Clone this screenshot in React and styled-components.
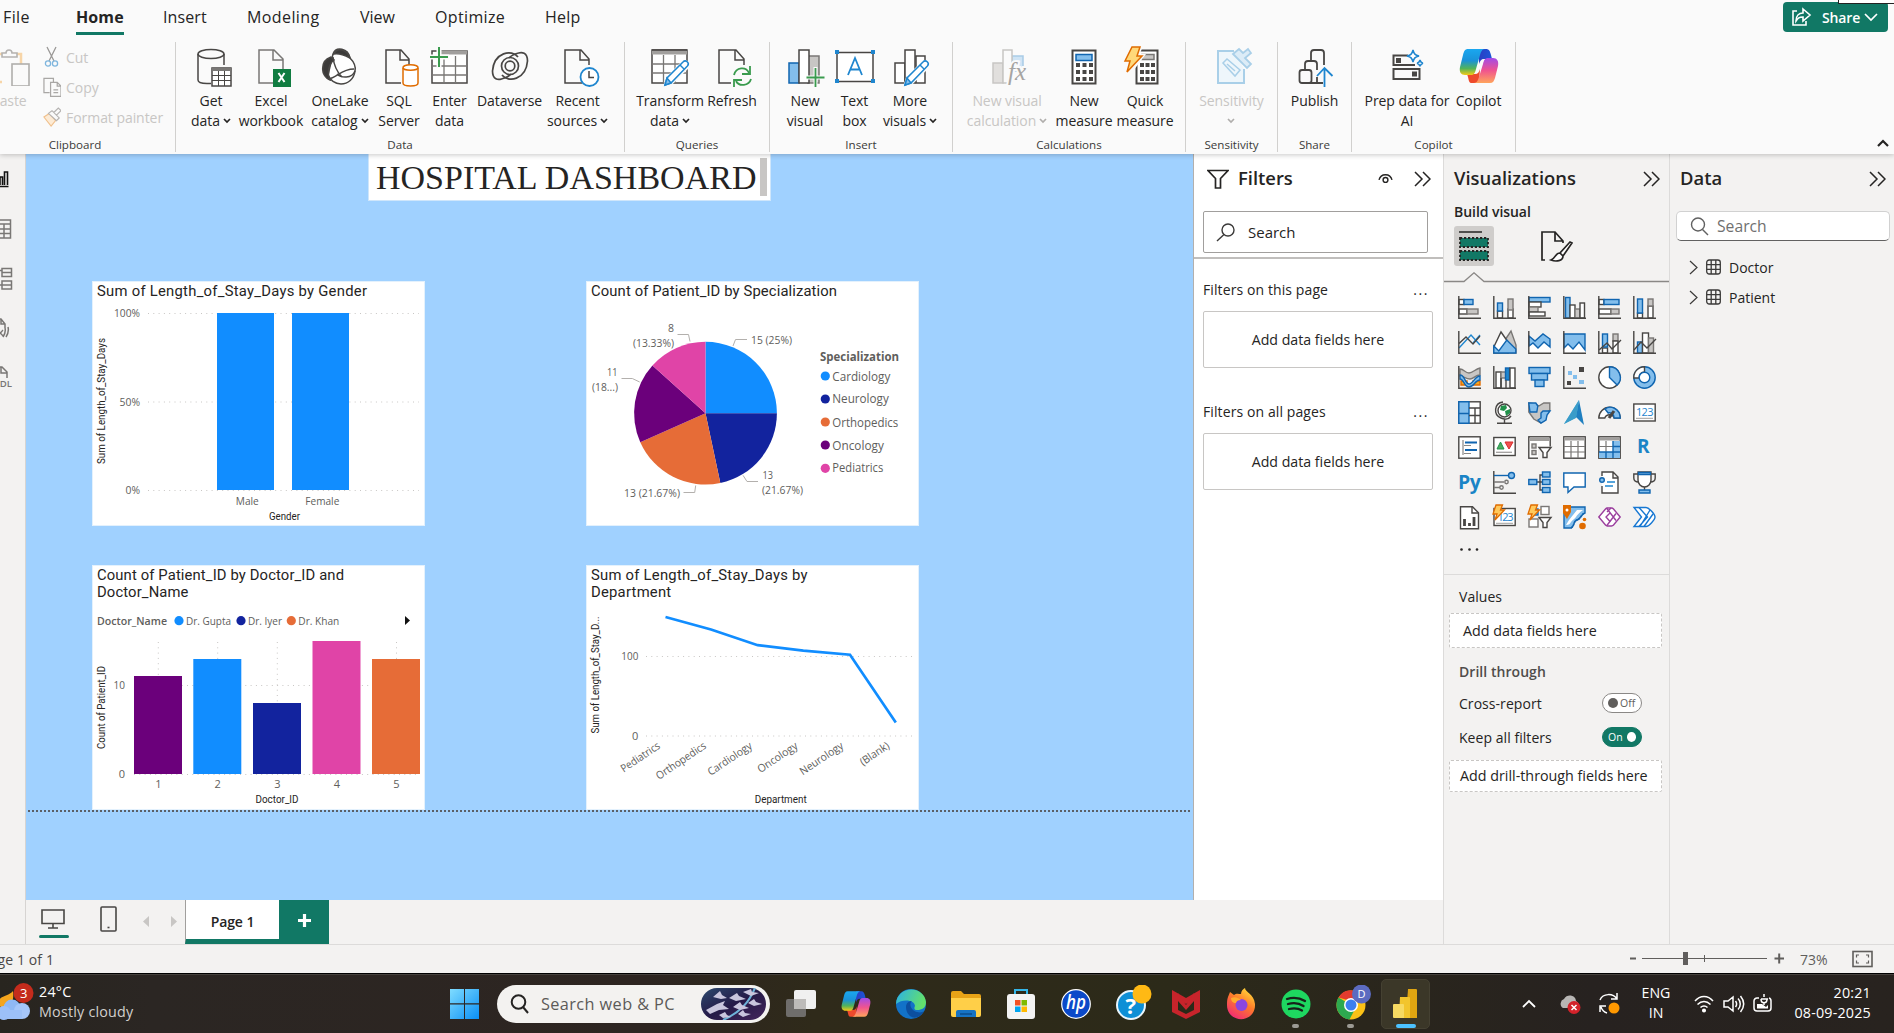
import React from "react";
import styled, { createGlobalStyle, css } from "styled-components";

const ui = `"Open Sans", "Noto Sans", sans-serif`;
const din = `Roboto, "Open Sans", sans-serif`;
const green = "#117865";
const blue = "#118DFF";
const navy = "#12239E";
const orange = "#E66C37";
const purple = "#6B007B";
const pink = "#E044A7";

const Global = createGlobalStyle`
  * { box-sizing: border-box; }
  body { margin: 0; overflow: hidden; background: #f3f2f1; font-family: ${ui}; color: #252423; }
  svg { display: block; flex: none; }
  h1, h2, h3, p { margin: 0; font-weight: inherit; }
`;

const Screen = styled.div`
  width: 1894px;
  height: 1033px;
  display: flex;
  flex-direction: column;
  overflow: hidden;
`;

/* ---------- ribbon ---------- */
const RibbonArea = styled.header`
  position: relative;
  z-index: 2;
  height: 154px;
  flex: none;
  background: #fafafa;
  box-shadow: 0 1px 5px rgba(0, 0, 0, 0.22);
  display: flex;
  flex-direction: column;
`;
const TabRow = styled.nav`
  height: 42px;
  display: flex;
  padding-left: 3px;
`;
const Tab = styled.div`
  width: ${(p) => p.$w}px;
  height: 35px;
  span {
    display: inline-block;
    height: 35px;
    font-size: 16px;
    line-height: 34px;
    letter-spacing: ${(p) => p.$ls || 0}px;
    font-weight: ${(p) => (p.$active ? 700 : 400)};
    border-bottom: 3px solid ${(p) => (p.$active ? green : "transparent")};
  }
`;
const ShareButton = styled.button`
  margin: 2px 6px 0 auto;
  width: 105px;
  height: 30px;
  border: 0;
  padding: 0 10px 0 8px;
  border-radius: 4px;
  background: ${green};
  color: #fff;
  font: 600 14px ${ui};
  letter-spacing: -0.15px;
  display: flex;
  align-items: center;
  svg:first-child { margin-right: 10px; }
  svg:last-child { margin-left: auto; }
`;
const WindowEdge = styled.div`
  position: absolute;
  right: 0;
  top: 0;
  width: 56px;
  height: 4px;
  background: #fff;
  border-left: 1px solid #222;
  border-bottom: 1px solid #222;
`;
const Groups = styled.div`
  display: flex;
  height: 110px;
`;
const Group = styled.section`
  width: ${(p) => p.$w}px;
  border-right: 1px solid #d1d0ce;
  display: flex;
  flex-direction: column;
  justify-content: space-between;
`;
const GroupItems = styled.div`
  display: flex;
  padding: 4px 0 0 ${(p) => p.$pad}px;
`;
const GroupName = styled.div`
  font-size: 11.6px;
  line-height: 16px;
  height: 15px;
  text-align: center;
  padding-right: ${(p) => p.$shift || 0}px;
  color: #3b3a39;
`;
const Tool = styled.div`
  width: ${(p) => p.$w}px;
  display: flex;
  flex-direction: column;
  align-items: center;
  gap: 5px;
  color: ${(p) => (p.$off ? "#c8c6c4" : "#252423")};
`;
const ToolText = styled.div`
  font-size: 14px;
  height: 20px;
  line-height: 20px;
  letter-spacing: -0.08px;
  white-space: nowrap;
  display: flex;
  align-items: center;
  gap: 3px;
`;
const ToolLines = styled.div`
  display: flex;
  flex-direction: column;
  align-items: center;
`;
const ClipTools = styled.div`
  display: flex;
  flex-direction: column;
  margin: -4px 0 -6px 5px;
`;
const ClipTool = styled.div`
  height: 30px;
  flex: none;
  display: flex;
  align-items: center;
  gap: 5px;
  font-size: 14px;
  letter-spacing: -0.05px;
  color: #c8c6c4;
`;
const PasteTool = styled(Tool)`
  margin-left: -20px;
`;
const Collapse = styled.div`
  margin-left: auto;
  padding: 97px 5px 0 0;
`;

/* ---------- workspace ---------- */
const Work = styled.main`
  height: 791px;
  flex: none;
  display: flex;
  border-bottom: 1px solid #dcdbda;
`;
const Rail = styled.aside`
  width: 26px;
  border-right: 1px solid #d6d4d2;
  background: #f3f2f1;
  padding-top: 14px;
  display: flex;
  flex-direction: column;
  gap: 26.500px;
`;
const Middle = styled.div`
  width: 1417px;
  display: flex;
  flex-direction: column;
`;
const MiddleTop = styled.div`
  display: flex;
  height: 746px;
`;
const Canvas = styled.div`
  position: relative;
  width: 1167px;
  background: #a0d1ff;
`;
const TitleBox = styled.div`
  position: absolute;
  left: 342px;
  top: 0;
  width: 403px;
  height: 47px;
  background: #fff;
  border: 1px solid #cfe6fb;
  border-top: 0;
  display: flex;
  padding-left: 7px;
  h1 {
    font: 34px/48px "Liberation Serif", serif;
    white-space: nowrap;
    width: 384px;
  }
`;
const ScrollThumb = styled.div`
  width: 7px;
  height: 38px;
  margin-top: 4px;
  background: #c8c6c4;
`;
const Card = styled.article`
  position: absolute;
  left: ${(p) => p.$x}px;
  top: ${(p) => p.$y}px;
  width: 333px;
  height: 245px;
  background: #fff;
  box-shadow: inset 0 0 0 1px #e3f1fd;
  display: flex;
  flex-direction: column;
  h3 {
    height: ${(p) => p.$lines * 17 + 4}px;
    padding: 2px 0 0 5px;
    font: 400 14.8px/17px ${din};
    letter-spacing: ${(p) => p.$ls}px;
    white-space: pre;
    color: #252423;
  }
`;
const PageEdge = styled.div`
  position: absolute;
  left: 2px;
  right: 2px;
  top: 656px;
  height: 2px;
  background: repeating-linear-gradient(90deg, #5a5f66 0 2px, transparent 2px 4px);
`;

/* ---------- filters ---------- */
const Filters = styled.aside`
  width: 250px;
  background: #fff;
  border-left: 1px solid #b3b0ad;
  display: flex;
  flex-direction: column;
`;
const PaneHead = styled.div`
  height: 50px;
  display: flex;
  align-items: center;
  padding: 0 ${(p) => p.$r}px 0 ${(p) => p.$l}px;
  h2 {
    font-size: 18.4px;
    font-weight: 600;
    margin: 0 auto 3px ${(p) => p.$gap || 0}px;
  }
`;
const HeadIcons = styled.div`
  display: flex;
  align-items: center;
  gap: 20px;
`;
const SearchBox = styled.div`
  margin: 7px 0 0 9px;
  width: 225px;
  height: 42px;
  flex: none;
  border: 1px solid #a19f9d;
  border-radius: 2px;
  display: flex;
  align-items: center;
  padding-left: 12px;
  gap: 13px;
  font-size: 15px;
`;
const FilterRule = styled.div`
  margin-top: 4px;
  border-top: 2px solid #c0bebc;
  height: 13px;
`;
const FilterHead = styled.div`
  display: flex;
  justify-content: space-between;
  margin: ${(p) => p.$mt}px 14px 0 9px;
  font-size: 14px;
  line-height: 20px;
  letter-spacing: 0.1px;
  span:last-child { letter-spacing: 1.6px; }
`;
const DropBox = styled.div`
  margin: 11px 0 0 9px;
  width: 230px;
  height: 57px;
  border: 1px solid #c8c6c4;
  border-radius: 2px;
  display: grid;
  place-items: center;
  padding-bottom: 1px;
  font-size: 14.2px;
`;

/* ---------- page tabs ---------- */
const PageBar = styled.div`
  height: 44px;
  display: flex;
`;
const ViewIcon = styled.div`
  width: ${(p) => p.$w}px;
  padding: ${(p) => p.$top}px 0 0 ${(p) => p.$l}px;
`;
const PageTab = styled.div`
  width: 94px;
  height: 44px;
  border-left: 1px solid #a19f9d;
  border-bottom: 5px solid ${green};
  background: #fff;
  font-size: 14px;
  font-weight: 600;
  letter-spacing: -0.1px;
  line-height: 44px;
  text-align: center;
`;
const AddPage = styled.div`
  width: 50px;
  height: 44px;
  background: ${green};
  display: grid;
  place-items: center;
  padding-bottom: 3px;
`;

/* ---------- visualizations ---------- */
const VizPane = styled.aside`
  width: 227px;
  border-left: 1px solid #dcdbda;
  border-right: 1px solid #dcdbda;
  background: #f3f2f1;
`;
const Build = styled.div`
  height: 22px;
  padding-left: 10px;
  font-size: 14px;
  line-height: 15px;
  font-weight: 600;
  letter-spacing: -0.05px;
`;
const ModeRow = styled.div`
  display: flex;
  gap: 47px;
  height: 46px;
  padding-left: 10px;
`;
const ModeTile = styled.div`
  width: 40px;
  height: 40px;
  border-radius: 3px;
  background: #cfcdcb;
  display: grid;
  place-items: center;
`;
const VizGrid = styled.div`
  margin: 13px 0 0 14px;
  display: grid;
  grid-template-columns: repeat(6, 23px);
  grid-auto-rows: 23px;
  gap: 12px;
`;
const Glyph = styled.div`
  color: #1a84c6;
  font-size: ${(p) => p.$s}px;
  line-height: 21px;
  font-weight: 700;
  padding-left: ${(p) => p.$l}px;
  letter-spacing: -0.4px;
`;
const More = styled.div`
  height: 46px;
  padding: 19px 0 0 16px;
  border-bottom: 1px solid #dcdbda;
`;
const Well = styled.div`
  margin: ${(p) => p.$mt}px 0 0 5px;
  width: 213px;
  height: ${(p) => p.$h}px;
  background: #fff;
  border: 1px dashed #c8c6c4;
  border-radius: 2px;
  display: flex;
  align-items: center;
  padding: 0 0 1px ${(p) => p.$l}px;
  font-size: 14.3px;
`;
const WellLabel = styled.div`
  margin-top: ${(p) => p.$mt}px;
  padding: 0 27px 0 15px;
  height: 20px;
  display: flex;
  align-items: center;
  justify-content: space-between;
  font-size: 14px;
  letter-spacing: 0.05px;
  font-weight: ${(p) => (p.$bold ? 600 : 400)};
  color: ${(p) => (p.$bold ? "#4f4d4b" : "#252423")};
`;
const Switch = styled.div`
  width: 40px;
  height: 20px;
  border-radius: 10px;
  border: 1px solid ${(p) => (p.$on ? green : "#8a8886")};
  background: ${(p) => (p.$on ? green : "#fff")};
  color: ${(p) => (p.$on ? "#fff" : "#605e5c")};
  display: flex;
  flex-direction: ${(p) => (p.$on ? "row-reverse" : "row")};
  align-items: center;
  gap: ${(p) => (p.$on ? 4 : 2)}px;
  padding: 0 5px;
  font-size: 10.5px;
  line-height: 18px;
  i {
    width: 10px;
    height: 10px;
    border-radius: 50%;
    background: currentColor;
  }
`;

/* ---------- data ---------- */
const DataPane = styled.aside`
  flex: 1;
  background: #f3f2f1;
`;
const DataSearch = styled.div`
  margin: 7px 0 11px 6px;
  width: 214px;
  height: 30px;
  background: #fff;
  border: 1px solid #d1d1d1;
  border-bottom: 1px solid #616161;
  border-radius: 5px;
  display: flex;
  align-items: center;
  gap: 8px;
  padding-left: 13px;
  font-size: 15.7px;
  color: #707070;
`;
const TableRow = styled.div`
  height: 30px;
  padding-left: 19px;
  display: flex;
  align-items: center;
  font-size: 14px;
  svg + svg { margin: 0 8px; }
`;

/* ---------- status ---------- */
const Status = styled.footer`
  height: 28px;
  flex: none;
  background: #f3f2f1;
  display: flex;
  align-items: center;
  color: #4a4846;
  font-size: 14px;
  p { width: 1648px; margin-left: -19px; white-space: nowrap; letter-spacing: 0.12px; }
`;
const Percent = styled.span`
  width: 66px;
  padding-left: 14px;
  font-size: 14px;
  color: #605e5c;
`;

/* ---------- taskbar ---------- */
const Taskbar = styled.footer`
  flex: 1;
  border-top: 1px solid #000;
  box-shadow: inset 0 1px 0 #45413d;
  background: linear-gradient(90deg, #28251f 0, #2b2623 8%, #2d2521 34%, #2f2a1a 43%, #2c2a19 62%, #2a261c 72%, #272220 84%, #28231f 100%);
  color: #fff;
  display: flex;
  align-items: center;
`;
const Weather = styled.div`
  width: 450px;
  display: flex;
  gap: 4px;
`;
const WeatherText = styled.div`
  font-size: 14.3px;
  line-height: 20.5px;
  letter-spacing: 0.22px;
  margin-top: -1px;
  p:last-child { color: #d2d0ce; }
`;
const Pill = styled.div`
  margin: 0 3px 0 18px;
  width: 273px;
  height: 38px;
  border-radius: 19px;
  background: #f3f2f0;
  color: #5c5a58;
  display: flex;
  align-items: center;
  padding: 0 4px 0 13px;
  font-size: 16.3px;
  letter-spacing: 0.4px;
  gap: 12px;
  svg:last-child { margin-left: auto; }
`;
const Slot = styled.div`
  width: 55px;
  height: 50px;
  display: flex;
  flex-direction: column;
  align-items: center;
  padding: 6px 0 0 ${(p) => p.$shift || 0}px;
  ${(p) => p.$active && css`
    width: 49px;
    margin-left: 3px;
    background: #3b3728;
    border: 1px solid #454132;
    border-radius: 5px;
    padding-top: 5px;
  `}
`;
const RunMark = styled.i`
  width: ${(p) => (p.$wide ? 20 : 7)}px;
  height: 4px;
  margin: 1px ${(p) => p.$back || 0}px 0 0;
  border-radius: 2px;
  background: ${(p) => (p.$wide ? "#4cc2ff" : "#9c9a94")};
`;
const Tray = styled.div`
  margin-left: auto;
  padding-right: 23px;
  display: flex;
  align-items: center;
`;
const TrayText = styled.div`
  font-size: ${(p) => p.$s}px;
  line-height: 20px;
  margin-top: -2px;
  width: ${(p) => p.$w}px;
  text-align: ${(p) => p.$a};
  letter-spacing: ${(p) => p.$ls}px;
  white-space: pre;
`;

/* ---------- ribbon icons ---------- */
const D = "#484644";
const G = "#797775";
const B = "#1f86cf";
const LB = "#83beec";

const R = ({ children, w = 40, h = 40, vb, ...o }) => (
  <svg width={w} height={h} viewBox={vb || `0 0 ${w} ${h}`} fill="none" stroke={D} strokeWidth="1.5" overflow="visible" {...o}>{children}</svg>
);
const Caret = ({ c = "#252423" }) => (
  <svg width="8" height="6" viewBox="0 0 8 6" fill="none" stroke={c} strokeWidth="1.7"><path d="M1 1l3 3 3-3" /></svg>
);
const pencil = (
  <g>
    <path d="M16 36L18 30L33 15a2.6 2.6 0 0 1 4 4L22 34z" transform="translate(0 2)" fill="#fafafa" stroke="#fafafa" strokeWidth="4" />
    <path d="M15 39L17 32L33 16a2.8 2.8 0 0 1 4.400 4L21 37z" fill="#fff" stroke={B} />
    <path d="M15 39l2-7 4 5z" fill={LB} stroke={B} />
    <path d="M30 19l4 4" stroke={B} />
  </g>
);

const icons = {
  getData: <R>
    <path d="M7 8v26c0 2 3 3.500 9 3.500h4M33 8v11" />
    <ellipse cx="20" cy="8" rx="13" ry="4.500" />
    <rect x="21" y="22" width="19" height="18" fill="#fff" /><path d="M21 23.500h19" strokeWidth="3" stroke={G} />
    <path d="M21 29.500h19M21 34.500h19M27.500 25v15M33.500 25v15" strokeWidth="1" />
  </R>,
  excel: <R>
    <path d="M22 37H8V4H23L32 13V23M22 4V14H32" stroke={G} />
    <rect x="22" y="23" width="18" height="18" fill="#107c41" stroke="none" />
    <path d="M27.500 27l6 9M33.500 27l-6 9" stroke="#fff" strokeWidth="2" />
  </R>,
  onelake: <R>
    <path d="M13 8c3-8 15-6 17 4 4 4 6 8 5 13-1 8-7 13-14 13-6 0-11-4-13-9z" fill="#fff" />
    <path d="M14 8c3-7 13-5 16 4-6-3-11-5-16-4zM11 11C-1 15 1 31 10 34c-3-7-2-15 4-20z" fill="#3b3a39" />
    <path d="M13 11c1 9 4 15 9 20M8 33c9-1 13-10 26-10M35 25c-3 8-14 7-18 3" />
  </R>,
  sql: <R>
    <path d="M22 37H7V4H22L30 13V19M21 4V14H30" />
    <path d="M24 22v15c0 4 15 4 15 0V22" fill="#fff" stroke="#e06c00" /><ellipse cx="31.500" cy="21.500" rx="7.500" ry="2.800" fill="#fff" stroke="#e06c00" />
  </R>,
  enter: <R>
    <rect x="2" y="5" width="35" height="32" fill="#fff" stroke={D} /><path d="M10 6.500h27" stroke="#a19f9d" strokeWidth="4" />
    <path d="M2 20h35M2 29h35M14 10v27M25.500 10v27" stroke={G} strokeWidth="1.300" />
    <path d="M9 0v22M-1 11h20" stroke="#fafafa" strokeWidth="5" /><path d="M9 1v20M0 11h18" stroke="#3a9b4e" strokeWidth="2" />
  </R>,
  dataverse: <R strokeWidth="1.700">
    <path d="M28 11C22 3 4 6 2.500 25c0 9 6 9 9 8 4-1 7-2 9.500-5" />
    <path d="M12 29c6 8 24 5 25.500-14 0-9-6-9-9-8-4 1-7 2-9.500 5" />
    <circle cx="20" cy="20" r="8.500" /><circle cx="20" cy="20" r="4.800" />
  </R>,
  recent: <R>
    <path d="M24 37H7V4H23L31 13V19M22 4V14H31" />
    <circle cx="31.500" cy="31" r="9" fill="#fff" stroke={B} strokeWidth="1.800" /><path d="M31 25v6.500h5" />
  </R>,
  transform: <R>
    <rect x="2" y="4" width="35" height="33" fill="#fff" /><path d="M2 6.500h35" stroke="#a19f9d" strokeWidth="4" />
    <path d="M2 4h35" /><path d="M2 18h35M2 27h35M13.500 9v28M25 9v28" stroke={G} strokeWidth="1.300" />
    {pencil}
  </R>,
  refresh: <R>
    <path d="M19 37H7V4H24L32 13V19M23 4V14H32" />
    <path d="M22 29c2-8 12-9 15-2M39 33c-2 7-12 8-15 2" stroke="#3a9b4e" strokeWidth="1.800" />
    <path d="M38 20v8h-8M22 41v-7h8" stroke="#3a9b4e" strokeWidth="1.800" />
  </R>,
  newVisual: <R>
    <rect x="23" y="10" width="11" height="27" fill="#c8c6c4" stroke={G} /><rect x="4" y="17" width="10" height="20" fill={LB} stroke="#1065b0" />
    <rect x="14" y="4" width="10" height="33" fill="#fff" />
    <path d="M30.500 21v20M21 31.500h18" stroke="#fafafa" strokeWidth="4" /><path d="M30.500 22v19M21.500 31.500h18" stroke="#3a9b4e" strokeWidth="1.800" />
  </R>,
  textBox: <R>
    <rect x="2" y="6.500" width="36" height="29" fill="#fff" />
    <path d="M13 29l7-17 7 17M15.500 23.500h9" stroke={B} strokeWidth="1.800" />
    {[[0, 4], [36, 4], [0, 33], [36, 33]].map(([x, y]) => <rect key={x + "-" + y} x={x} y={y} width="4" height="4" fill={B} stroke="none" />)}
  </R>,
  moreVisuals: <R>
    <rect x="5" y="17" width="10" height="20" fill="#fff" /><rect x="26" y="10" width="9" height="27" fill="#fff" /><rect x="15" y="4" width="10" height="33" fill="#fff" />
    {pencil}
  </R>,
  calc: <R stroke="#c8c6c4">
    <rect x="25" y="10" width="11" height="15" fill="#cfe4f5" stroke="#a9cbe6" /><rect x="6" y="17" width="10" height="20" fill="#e1dfdd" />
    <path d="M25 18V4H16v33h4" fill="#fafafa" />
    <text x="21" y="34" fontFamily="Liberation Serif, serif" fontStyle="italic" fontSize="25" fill="#a6a4a2" stroke="#fafafa" strokeWidth="4" paintOrder="stroke">fx</text>
  </R>,
  measure: <R>
    <rect x="8.500" y="4.500" width="23" height="33" fill="#fff" stroke={D} strokeWidth="2" /><rect x="12" y="8.500" width="16" height="6" fill={LB} stroke="#1065b0" />
    {[18, 25, 32].map((y) => [12, 18.5, 25].map((x) => <rect key={x + "-" + y} x={x} y={y - 1} width="4" height="4" fill={D} stroke="none" />))}
  </R>,
  quick: <R>
    <rect x="11.500" y="4.500" width="21" height="33" fill="#fff" strokeWidth="2" /><rect x="17" y="8.500" width="12" height="5" fill="#c8c6c4" stroke={G} />
    {[18, 25, 32].map((y) => [15, 20.5, 26].map((x) => <rect key={x + "-" + y} x={x} y={y - 1} width="4" height="4" fill={D} stroke="none" />))}
    <path d="M7 2h8l-3 8h5L4 27l3-10H1z" fill="#fafafa" stroke="#fafafa" strokeWidth="4" />
    <path d="M7 1h8l-3 9h5L2 26l3-11H0z" fill="#ffd87a" stroke="#e06c00" />
  </R>,
  sensitivity: <R stroke="#a9cfe8">
    <path d="M22 5H6v32h26V23" fill="#eef6fb" strokeWidth="2" />
    <path d="M11 17l4-4 13 11-5 6zM15 18l8 7" /><path d="M21 8l6-5 4 4 5-4 3 4-6 5 6 6-4 4z" fill="#dcecf7" strokeWidth="1.800" />
  </R>,
  publish: <R>
    <path d="M16 15V7a3 3 0 0 1 3-3h7a3 3 0 0 1 3 3v12M10 23v-5a3 3 0 0 1 3-3h6a3 3 0 0 1 3 3v6" strokeWidth="1.800" />
    <rect x="4.500" y="24" width="12" height="13" rx="2.500" strokeWidth="1.800" /><path d="M14 37h14M22 31v6" strokeWidth="1.800" />
    <path d="M29.500 41V22M22 30l7.500-8 8 8" stroke={B} strokeWidth="1.800" />
  </R>,
  prep: <R>
    <path d="M21 9.500H6.500V19H28" strokeWidth="2" /><rect x="6.500" y="23" width="26" height="10" strokeWidth="2" />
    <rect x="9" y="12" width="5" height="5" fill={D} stroke="none" /><rect x="25" y="25.500" width="5" height="5" fill={D} stroke="none" />
    <path d="M26 4c1 4 2 5 6 6-4 1-5 2-6 6-1-4-2-5-6-6 4-1 5-2 6-6z" fill="#fff" stroke={B} />
    <path d="M33 14c.5 2 1 2.800 3 3.200-2 .5-2.500 1.200-3 3.200-.5-2-1-2.700-3-3.200 2-.4 2.500-1.200 3-3.200z" fill="#fff" stroke={B} />
  </R>,
};

const CopilotLogo = ({ s = 40, id = "a" }) => (
  <svg width={s} height={s} viewBox="0 0 40 40">
    <defs>
      <linearGradient id={"cl" + id} x1="0" y1="0" x2="0" y2="1"><stop offset="0" stopColor="#1aa7f0" /><stop offset=".45" stopColor="#1a92d8" /><stop offset=".75" stopColor="#52b35a" /><stop offset="1" stopColor="#f5cb16" /></linearGradient>
      <linearGradient id={"cr" + id} x1="0" y1="0" x2="0" y2="1"><stop offset="0" stopColor="#a24be8" /><stop offset=".5" stopColor="#f0548f" /><stop offset="1" stopColor="#ffa45c" /></linearGradient>
      <linearGradient id={"ct" + id} x1="0" y1="0" x2="1" y2="0"><stop offset="0" stopColor="#2a3ec4" /><stop offset="1" stopColor="#1b56d8" /></linearGradient>
    </defs>
    <path d="M20 3h7c3 0 4 2 5 6l1 4h-8c-3 0-4 2-5 5z" fill={`url(#ct${id})`} />
    <path d="M20 37h-7c-3 0-3-2-4-6l-1-3h8c3 0 4-2 5-5z" fill="#ee4a2c" />
    <path d="M9 3h17c-3 0-4 3-5 6l-4 14c-1 4-2 6-5 6H6c-4 0-6-3-5-8L4 9c1-4 2-6 5-6z" fill={`url(#cl${id})`} />
    <path d="M31 37H15c3 0 4-3 5-6l4-13c1-4 2-6 5-6h5c4 0 6 3 5 8l-3 12c-1 3-2 5-5 5z" fill={`url(#cr${id})`} />
  </svg>
);

const tool = (icon, w, lines, opt = {}) => ({ icon, w, lines, ...opt });
const groups = [
  { name: "Data", w: 449, pad: 8, tools: [
    tool("getData", 54, ["Get", "data>"]), tool("excel", 66, ["Excel", "workbook"]), tool("onelake", 72, ["OneLake", "catalog>"]),
    tool("sql", 46, ["SQL", "Server"]), tool("enter", 55, ["Enter", "data"]), tool("dataverse", 65, ["Dataverse"]), tool("recent", 71, ["Recent", "sources>"])] },
  { name: "Queries", w: 145, pad: 11, tools: [tool("transform", 68, ["Transform", "data>"]), tool("refresh", 56, ["Refresh"])] },
  { name: "Insert", w: 183, pad: 13, tools: [tool("newVisual", 44, ["New", "visual"]), tool("textBox", 55, ["Text", "box"]), tool("moreVisuals", 56, ["More", "visuals>"])] },
  { name: "Calculations", w: 233, pad: 8, tools: [tool("calc", 92, ["New visual", "calculation>"], { off: true }), tool("measure", 62, ["New", "measure"]), tool("quick", 60, ["Quick", "measure"])] },
  { name: "Sensitivity", w: 92, pad: 6, tools: [tool("sensitivity", 79, ["Sensitivity", ">"], { off: true })] },
  { name: "Share", w: 74, pad: 6, tools: [tool("publish", 61, ["Publish"])] },
  { name: "Copilot", w: 164, pad: 8, tools: [tool("prep", 94, ["Prep data for", "AI"]), tool("copilot", 49, ["Copilot"])] },
];

const RibbonTool = ({ t }) => (
  <Tool $w={t.w} $off={t.off}>
    {t.icon === "copilot" ? <CopilotLogo /> : icons[t.icon]}
    <ToolLines>
      {t.lines.map((l) => (
        <ToolText key={l}>{l.replace(">", "")}{l.endsWith(">") && <Caret c={t.off ? "#b0aeac" : "#252423"} />}</ToolText>
      ))}
    </ToolLines>
  </Tool>
);

const Ribbon = () => (
  <RibbonArea>
    <TabRow>
      <Tab $w={73} $ls={0.4}><span>File</span></Tab>
      <Tab $w={87} $active $ls={0.1}><span>Home</span></Tab>
      <Tab $w={84} $ls={0.1}><span>Insert</span></Tab>
      <Tab $w={113} $ls={0.4}><span>Modeling</span></Tab>
      <Tab $w={75}><span>View</span></Tab>
      <Tab $w={110} $ls={0.35}><span>Optimize</span></Tab>
      <Tab $w={60} $ls={0.2}><span>Help</span></Tab>
      <ShareButton>
        <svg width="21" height="20" viewBox="0 0 21 20" fill="none" stroke="#fff" strokeWidth="1.600"><path d="M6 4H2v14h13v-4" /><path d="M12 2l7 6-7 6v-4c-4 0-5 1-7 4 0-5 3-8 7-8z" /></svg>
        Share
        <svg width="14" height="9" viewBox="0 0 14 9" fill="none" stroke="#fff" strokeWidth="1.700"><path d="M1 1l6 6 6-6" /></svg>
      </ShareButton>
    </TabRow>
    <WindowEdge />
    <Groups>
      <Group $w={176}>
        <GroupItems $pad={0}>
          <PasteTool $w={58} $off>
            <svg width="58" height="40" viewBox="0 0 58 40" fill="none" strokeWidth="1.600">
              <path d="M22 36H10V8H41V18" stroke="#f7d5a8" strokeWidth="2.500" /><path d="M22 11v-4h4c0-4 6-4 6 0h5v4z" fill="#fafafa" stroke="#b5b3b1" />
              <rect x="32" y="18" width="17" height="22" fill="#fafafa" stroke="#b0aeac" />
            </svg>
            <ToolText>Paste</ToolText>
          </PasteTool>
          <ClipTools>
            <ClipTool>
              <svg width="18" height="22" viewBox="0 0 18 22" fill="none" stroke="#9a9896" strokeWidth="1.300"><path d="M4 1l7 14M13 1L6 15" /><circle cx="5" cy="17.500" r="2.600" stroke="#7fb6de" /><circle cx="12" cy="17.500" r="2.600" stroke="#7fb6de" /></svg>
              Cut
            </ClipTool>
            <ClipTool>
              <svg width="18" height="22" viewBox="0 0 19 22" fill="none" stroke="#a9a7a5" strokeWidth="1.300"><path d="M7 17H1V2h10v4M8 6h7l4 4v11H8zM15 6v4h4M11 14h5M11 17h5" /></svg>
              Copy
            </ClipTool>
            <ClipTool>
              <svg width="18" height="22" viewBox="0 0 20 22" fill="none" strokeWidth="1.300"><path d="M1 11l6-4 7 8-5 6z" fill="#fdebd5" stroke="#f0c08c" /><path d="M6 7l4-3 8 8-3 3zM12 6l5-5 3 3-5 5" stroke="#b5b3b1" fill="#fafafa" /></svg>
              Format painter
            </ClipTool>
          </ClipTools>
        </GroupItems>
        <GroupName $shift={25}>Clipboard</GroupName>
      </Group>
      {groups.map((g) => (
        <Group key={g.name} $w={g.w}>
          <GroupItems $pad={g.pad}>{g.tools.map((t) => <RibbonTool key={t.icon} t={t} />)}</GroupItems>
          <GroupName>{g.name}</GroupName>
        </Group>
      ))}
      <Collapse><svg width="12" height="8" viewBox="0 0 12 8" fill="none" stroke="#252423" strokeWidth="2.200"><path d="M1 7l5-5 5 5" /></svg></Collapse>
    </Groups>
  </RibbonArea>
);

/* ---------- charts ---------- */
const T = ({ x, y, w, a = "start", s = 11, f = ui, c = "#605e5c", b = 400, r, children }) => (
  <text x={x} y={y} textAnchor={a} fontSize={s} fontFamily={f} fill={c} fontWeight={b} textLength={w} lengthAdjust="spacingAndGlyphs" transform={r ? `rotate(${r} ${x} ${y})` : undefined}>{children}</text>
);
const Dots = (p) => <line stroke="#c8c6c4" strokeWidth="1" strokeDasharray="1 4.300" {...p} />;
const ink = "#252423";

const StayByGender = () => (
  <svg width="333" height="224" viewBox="92 302 333 224">
    {[[313.5, "100%", 26], [402, "50%", 20.5], [490.5, "0%", 14.5]].map(([y, l, w]) => (
      <g key={l}><Dots x1="148" x2="419" y1={y} y2={y} /><T x={140} y={y + 3.5} a="end" w={w}>{l}</T></g>
    ))}
    <rect x="217" y="313" width="57" height="177" fill={blue} /><rect x="292" y="313" width="57" height="177" fill={blue} />
    <T x={247.300} y={505} a="middle" w={23}>Male</T><T x={322.300} y={505} a="middle" w={34}>Female</T>
    <T x={284.500} y={520} a="middle" w={31} s={10} f={din} c={ink}>Gender</T>
    <T x={105} y={401} a="middle" w={126} s={10} f={din} c={ink} r={-90}>Sum of Length_of_Stay_Days</T>
  </svg>
);

const cx = 705.5, cy = 413.2, rad = 71.4;
const slices = [[15, blue], [13, navy], [13, orange], [11, purple], [8, pink]];
const arcs = slices.reduce((acc, [n, c]) => {
  const a0 = acc.at, a1 = a0 + (n / 60) * Math.PI * 2;
  const pt = (a) => `${(cx + rad * Math.sin(a)).toFixed(2)} ${(cy - rad * Math.cos(a)).toFixed(2)}`;
  acc.list.push({ c, d: `M${cx} ${cy}L${pt(a0)}A${rad} ${rad} 0 0 1 ${pt(a1)}z` });
  acc.at = a1;
  return acc;
}, { at: 0, list: [] }).list;

const PatientsBySpecialization = () => (
  <svg width="333" height="224" viewBox="586 302 333 224">
    {arcs.map((s) => <path key={s.c} d={s.d} fill={s.c} />)}
    <g fill="none" stroke="#b3b0ad">
      <path d="M733 346L735.500 339.500H747" /><path d="M677.500 334.500H688.500L690 341.500" /><path d="M621.500 378.500H632.300L639.700 382" />
      <path d="M683.500 492.500H694.700L695.700 485.500" /><path d="M743 475.300L747 481.500H758" />
    </g>
    <T x={751} y={344} w={41}>15 (25%)</T>
    <T x={674} y={332} a="end" w={6}>8</T><T x={674} y={347.300} a="end" w={41}>(13.33%)</T>
    <T x={617.500} y={376} a="end" w={10.500}>11</T><T x={618} y={391} a="end" w={26}>(18...)</T>
    <T x={680} y={497.300} a="end" w={56}>13 (21.67%)</T>
    <T x={762.500} y={479} w={10.500}>13</T><T x={762} y={494} w={41}>(21.67%)</T>
    <T x={820} y={361} w={79} s={11.500} b={700}>Specialization</T>
    {[["Cardiology", 376, 381, 58, blue], ["Neurology", 399, 403.2, 56.5, navy], ["Orthopedics", 422, 427, 66, orange], ["Oncology", 445, 450, 51.5, purple], ["Pediatrics", 468.3, 472, 51, pink]].map(([n, dy, ty, w, c]) => (
      <g key={n}><circle cx="825.300" cy={dy} r="4.600" fill={c} /><T x={832.300} y={ty} w={w} s={11.700}>{n}</T></g>
    ))}
  </svg>
);

const PatientsByDoctor = () => (
  <svg width="333" height="207" viewBox="92 603 333 207">
    <T x={97} y={625} w={70} s={11.500} b={600}>Doctor_Name</T>
    {[["Dr. Gupta", 179, 45, blue], ["Dr. Iyer", 241, 34, navy], ["Dr. Khan", 291.3, 41, orange]].map(([n, x, w, c]) => (
      <g key={n}><circle cx={x} cy="620.700" r="4.600" fill={c} /><T x={x + 7} y={625} w={w}>{n}</T></g>
    ))}
    <path d="M405 616l5 4.500-5 4.500z" fill="#111" />
    <Dots x1="134" x2="420" y1="685.500" y2="685.500" /><Dots x1="134" x2="420" y1="774.500" y2="774.500" />
    {[[158.3, 134, 676, purple], [217.7, 193.3, 659, blue], [277.3, 253, 703, navy], [337, 312.5, 641, pink], [396.5, 372, 659, orange]].map(([c, x, y, f], i) => (
      <g key={f}><Dots x1={c} x2={c} y1="642" y2="774" /><rect x={x} y={y} width="48" height={774 - y} fill={f} /><T x={c} y={788} a="middle">{i + 1}</T></g>
    ))}
    <T x={125} y={689.300} a="end" w={11.500}>10</T><T x={125} y={778} a="end">0</T>
    <T x={277} y={803} a="middle" w={43} s={10} f={din} c={ink}>Doctor_ID</T>
    <T x={105} y={707.500} a="middle" w={83} s={10} f={din} c={ink} r={-90}>Count of Patient_ID</T>
  </svg>
);

const StayByDepartment = () => (
  <svg width="333" height="207" viewBox="586 603 333 207">
    <Dots x1="646" x2="913" y1="656.500" y2="656.500" /><Dots x1="646" x2="913" y1="736" y2="736" />
    <path d="M665.500 617L711 629.500 757.700 645.200 803.300 650.700 850 654.700 895.800 722.500" fill="none" stroke={blue} strokeWidth="2.700" />
    <T x={638.300} y={660.300} a="end" w={17}>100</T><T x={638.300} y={740} a="end">0</T>
    {[["Pediatrics", 661, 45], ["Orthopedics", 707, 58], ["Cardiology", 753, 51], ["Oncology", 798.7, 46], ["Neurology", 844.3, 50], ["(Blank)", 890.3, 33]].map(([n, x, w]) => (
      <T key={n} x={x} y={747.500} a="end" w={w} s={10.800} r={-34}>{n}</T>
    ))}
    <T x={780.700} y={803} a="middle" w={52} s={10} f={din} c={ink}>Department</T>
    <T x={599.300} y={675} a="middle" w={117} s={10} f={din} c={ink} r={-90}>Sum of Length_of_Stay_D...</T>
  </svg>
);

/* ---------- visual type icons ---------- */
const V = ({ children }) => <svg width="23" height="23" viewBox="0 0 23 23" fill="none" stroke={D} strokeWidth="1.400" overflow="visible">{children}</svg>;
const Ax = () => <path d="M.8 0v22.200H23" />;
const BS = "#1065b0";
const bf = { fill: LB, stroke: BS };
const gf = { fill: "#c8c6c4", stroke: G };
const wf = { fill: "#fff", stroke: D };
const bolt = <path d="M3-1h6.500l-2 5h4L2 14l2-6H0z" fill="#ffc95c" stroke="#e06c00" strokeWidth="1.300" />;
const funnel = <path d="M11 11.500h12l-4 5v5h-4v-5z" fill="#fff" stroke={D} />;

const visuals = [
  <V><rect x="1" y="3.500" width="5" height="5" {...wf} /><rect x="6" y="3.500" width="9" height="5" {...bf} /><rect x="1" y="13" width="8" height="5" {...wf} /><rect x="9" y="13" width="11" height="5" {...gf} /><Ax /></V>,
  <V><rect x="4.500" y="15" width="5" height="7" {...wf} /><rect x="4.500" y="7" width="5" height="8" {...bf} /><rect x="15" y="13" width="5" height="9" {...wf} /><rect x="15" y="3" width="5" height="11" {...gf} /><Ax /></V>,
  <V><rect x="1" y="1.500" width="21" height="4.500" {...bf} /><rect x="1" y="6" width="12" height="5" {...wf} /><rect x="1" y="11" width="9" height="5" {...gf} /><rect x="1" y="16" width="16" height="4" {...wf} /><Ax /></V>,
  <V><rect x="2.500" y="1.500" width="4.500" height="20.500" {...bf} /><rect x="7" y="9" width="5" height="13" {...wf} /><rect x="12" y="13" width="5" height="9" {...gf} /><rect x="17" y="7" width="4.500" height="15" {...wf} /><Ax /></V>,
  <V><rect x="1" y="3.500" width="5" height="5" {...wf} /><rect x="6" y="3.500" width="15" height="5" {...bf} /><rect x="1" y="13" width="12" height="5" {...wf} /><rect x="13" y="13" width="8" height="5" {...gf} /><Ax /></V>,
  <V><rect x="4.500" y="17" width="5" height="5" {...wf} /><rect x="4.500" y="3" width="5" height="14" {...bf} /><rect x="15" y="10" width="5" height="12" {...wf} /><rect x="15" y="3" width="5" height="7" {...gf} /><Ax /></V>,
  <V><path d="M1 18L13 5l9 10" stroke={B} transform="translate(0 -1)" /><path d="M15 12l7-8" stroke={B} /><path d="M1 12.500l7-6.500 7 7 7-8" stroke={D} /><Ax /></V>,
  <V><path d="M12 9L18 0l5 14v8h-8z" {...gf} /><path d="M.8 16L8 1l7 10v11H.8z" {...wf} /><path d="M.8 22V15l5 5 8-11 9 9v4z" {...bf} /></V>,
  <V><path d="M1 22V14l4-3 5 5 6-7 6 6v7z" fill="#fff" stroke="none" /><path d="M1 5l6 5 8-7 7 5v8l-6-5-6 6-5-5-4 3z" {...bf} /><Ax /></V>,
  <V><rect x="1" y="3" width="21" height="18" fill="#fff" stroke="none" /><path d="M1 3h21v16l-6-8-6 7-5-5-4 4z" {...bf} /><Ax /></V>,
  <V><rect x="4.500" y="17" width="5" height="5" {...wf} /><rect x="4.500" y="3" width="5" height="13" {...bf} /><rect x="15" y="3" width="5" height="7" {...gf} /><rect x="15" y="10" width="5" height="12" {...wf} /><path d="M1 19l8-7 5 6 9-9" /><Ax /></V>,
  <V><rect x="4.500" y="11" width="5" height="11" {...bf} /><rect x="9.500" y="2" width="6" height="20" {...wf} /><rect x="15.500" y="7" width="5" height="15" {...gf} /><path d="M1 19l7-8 6 6 9-9" /><Ax /></V>,
  <V><path d="M3 15h6v4H3zM15 15h7v4h-7z" fill="#f5a623" stroke="#e06c00" /><path d="M2 3c4 0 5 4 9 4s6-4 11-5v7c-5 0-6 4-10 4S5 10 2 10z" {...gf} /><path d="M2 9c5 0 5 9 9 9s6-8 11-8v4c-5 0-6 7-11 7s-5-8-9-8z" {...bf} /><Ax /></V>,
  <V><rect x="3" y="6" width="5" height="16" {...wf} /><rect x="8" y="6" width="5" height="6" {...gf} /><rect x="12.500" y="2" width="4" height="12" fill={B} stroke={BS} /><rect x="17" y="2" width="5" height="20" {...wf} /><path d="M8 12v10M13 14v8" /><Ax /></V>,
  <V><rect x="1" y="1.500" width="21" height="6" {...bf} /><rect x="3.500" y="7.500" width="16" height="6.500" {...bf} /><rect x="7" y="14" width="9" height="6.500" {...bf} /></V>,
  <V><Ax /><g stroke="none"><rect x="16" y="1" width="5" height="5" fill={D} /><rect x="4" y="15" width="4" height="4" fill={D} /><rect x="5" y="5" width="4" height="4" fill={LB} /><rect x="10" y="9" width="4" height="4" fill={LB} /><rect x="16" y="14" width="5" height="4" fill={LB} /></g></V>,
  <V><circle cx="11.500" cy="11.500" r="10.700" {...wf} /><path d="M11.500 11.500V.8a10.700 10.700 0 0 1 7.600 18.300z" {...bf} /></V>,
  <V><circle cx="11.500" cy="11.500" r="10.700" {...bf} /><path d="M11.500 .8A10.700 10.700 0 0 0 .8 12H6a5.500 5.500 0 0 1 5.500-6z" {...wf} /><circle cx="11.500" cy="11.500" r="5.300" fill="#fff" stroke={BS} /></V>,
  <V><rect x=".8" y=".8" width="21.400" height="21.400" {...wf} /><path d="M.8.8H11v21.400H.8zM.8 12.500H11" {...bf} /><path d="M11 7h11M11 14.500h11M17 7v15" /></V>,
  <V><circle cx="11.500" cy="9.500" r="6.500" fill="#fff" stroke={D} /><path d="M8 5l5-1 1 3-3 3-4-1zM12 10l5-2v4l-4 3z" fill="#21914a" stroke="none" /><path d="M10 1C1 2 0 14 8 17c4 2 8 1 10-2M11.500 17.500V22M4 22.200h15" /></V>,
  <V><path d="M.8 2l6 1 4 2 5-3h6v7l-3 4-1 5-5 4-7-4-5-7z" {...gf} /><path d="M.8 2h7l2 3-1 6H2zM13 12l2-2h7l-3 4-1 5-5 3-3-3 3-2z" {...bf} /></V>,
  <V><g stroke="none"><path d="M16-1L1 23l13-7z" fill="#4fb0dc" /><path d="M16-1l5 25-8-8z" fill="#1f7fc0" /><path d="M16-1L13 17l-12 6z" fill="#3a9cc9" /></g></V>,
  <V><path d="M.8 17a10.700 10.700 0 0 1 21.400 0h-6a5 5 0 0 0-9.400 0z" {...wf} /><path d="M7 8c5-4 15-1 15.200 9h-6c0-4-4-6-6-5z" {...bf} /><path d="M16 10l-5 7" strokeWidth="3" /></V>,
  <V><rect x=".8" y="3" width="21.400" height="17" {...wf} /><text x="3" y="14.500" fontSize="11" fontFamily={ui} fill={B} stroke="none" textLength="17.5">123</text><path d="M3 17.300h17" stroke="#a19f9d" strokeWidth="1" /></V>,
  <V><rect x=".8" y=".8" width="21.400" height="21.400" {...wf} /><path d="M5 4v15M6 9.500h7M6 17.500h7" stroke="#8a8886" strokeWidth="1.200" /><path d="M7 6.500h12M7 14h12" stroke={BS} strokeWidth="2.200" /></V>,
  <V><rect x=".8" y="1.500" width="21.400" height="18" {...wf} /><path d="M4 13l3.500-7L11 13z" fill="#4cae60" stroke="#21914a" strokeWidth="1" /><path d="M12 6h8l-4 7z" fill="#ef5350" stroke="#d92c2c" strokeWidth="1" /><path d="M3 16.300h16" stroke="#a19f9d" strokeWidth="1.300" /></V>,
  <V><rect x=".8" y=".8" width="21.400" height="21.400" {...wf} /><path d="M1 3.500h21" stroke="#a19f9d" strokeWidth="3" /><rect x="4" y="8" width="4" height="4" {...gf} /><rect x="4" y="14.500" width="4" height="4" {...gf} /><path d="M11 11.500h12v11H11z" fill="#f3f2f1" stroke="#f3f2f1" strokeWidth="2" />{funnel}</V>,
  <V><rect x=".8" y=".8" width="21.400" height="21.400" {...wf} /><path d="M1 3h21" stroke="#a19f9d" strokeWidth="3" /><path d="M1 10.500h21M1 16h21M8 5v17M15 5v17" stroke={G} strokeWidth="1.200" /></V>,
  <V><rect x=".8" y=".8" width="21.400" height="21.400" {...wf} /><path d="M15 5h7v17H1v-6h14z" fill={LB} stroke="none" /><path d="M1 3h21" stroke="#a19f9d" strokeWidth="3" /><path d="M1 10.500h14M8 5v11" stroke={G} strokeWidth="1.200" /><path d="M15 10.500h7M1 16h21M8 16v6M15 5v17" stroke={BS} /></V>,
  <Glyph $s={19} $l={4}>R</Glyph>,
  <Glyph $s={19.5} $l={-1}>Py</Glyph>,
  <V><Ax /><path d="M1 4.500h14" stroke={BS} /><circle cx="18.500" cy="4.500" r="3" {...bf} /><path d="M1 11h10M1 16.500h6" stroke={G} /><circle cx="13.500" cy="11" r="1.700" stroke={G} /><circle cx="8.500" cy="16.500" r="1.700" stroke={G} /></V>,
  <V><path d="M8 11h7M15 4H12v15h3" /><rect x=".8" y="8.500" width="8" height="5" {...bf} /><rect x="14.500" y="1" width="7.500" height="5" {...bf} /><rect x="14.500" y="8.500" width="7.500" height="5" {...bf} /><rect x="14.500" y="16.500" width="7.500" height="5" {...bf} /></V>,
  <V><path d="M.8 2h21.400v14H11l-6 5.500V16H.8z" fill="#fff" stroke={BS} /></V>,
  <V><path d="M4 5V1h11l5 5v16H4v-7M15 1v6h5" fill="#fff" /><circle cx="4" cy="9" r="2.300" {...bf} /><path d="M9 11h8M7 15h8" stroke={B} /></V>,
  <V><path d="M5 1h13v8c0 4-3 7-6.500 7S5 13 5 9z" {...wf} /><path d="M5 3H.8v4c0 3 2 4 5 4M18 3h4.200v4c0 3-2 4-5 4M11.500 16v4" /><path d="M5.500 1.500h12v2h-12zM6 19h11v3H6z" {...bf} /></V>,
  <V><path d="M2.500.8h12l6 6v16h-18z" {...wf} /><path d="M14 1v6h6" /><path d="M6.500 20v-7M11.500 20v-3M16 20v-9" strokeWidth="2.800" /></V>,
  <V><rect x="1" y="2.500" width="21.200" height="17" {...wf} /><text x="4.500" y="15" fontSize="11" fontFamily={ui} fill={B} stroke="none" textLength="16">123</text><path d="M3 17.300h17" stroke="#a19f9d" strokeWidth="1" />{bolt}</V>,
  <V><rect x="13" y=".5" width="8" height="8" fill="#fff" stroke={G} /><rect x="1" y="13" width="9" height="8" fill="#fff" stroke={G} /><rect x="5" y="3" width="5" height="6" {...bf} />{bolt}{funnel}</V>,
  <V><path d="M1 1h21v6c-4 1-4 6-8 7s-2 6-6 8H1z" fill={LB} stroke={BS} /><path d="M3 19l3-5 4-5 4-5h6c-4 3-6 5-7 7s-4 3-5 5-2 3-5 3z" fill="#fff" stroke="none" /><path d="M8 22c4-2 2-7 6-8s4-6 8-7" stroke={BS} strokeDasharray="2 1" /><path d="M0-1h8v7l-4 7-4-6z" fill="#e06c00" stroke="none" /><circle cx="4" cy="4" r="1.500" fill="#fff" stroke="none" /><circle cx="19.500" cy="20" r="3.300" fill="#e06c00" stroke="none" /><circle cx="21.500" cy="13.500" r="1.800" fill="#e06c00" stroke="none" /></V>,
  <V><g stroke="#9b3f9e" fill="#fff" strokeWidth="1.400"><path d="M.8 11L7.500 3a3 3 0 0 1 2-1h4a3 3 0 0 1 2 1L22.200 11l-6.700 8a3 3 0 0 1-2 1h-4a3 3 0 0 1-2-1z" /><path d="M8.500 2L18 14.500M8.500 20L18 7.500M12.500 6.500L8 11l4.500 5M13 2l-4 4" fill="none" /></g></V>,
  <V><g stroke="#1677d2" fill="#fff" strokeWidth="1.400"><path d="M1 1.500h12c3 0 9 7 9 9.500s-6 9.500-9 9.500H1L8.500 11z" /><path d="M6 1.500l8.500 9.500L6 20.500M17 4L7 20.500M20 8L11 20.500" fill="none" /></g></V>,
];

const Chevrons = () => <svg width="17" height="16" viewBox="0 0 17 16" fill="none" stroke="#252423" strokeWidth="1.500"><path d="M1 1l7 7-7 7M9 1l7 7-7 7" /></svg>;

const FiltersPane = () => (
  <Filters>
    <PaneHead $l={13} $r={12} $gap={9}>
      <svg width="22" height="20" viewBox="0 0 22 20" fill="none" stroke="#252423" strokeWidth="1.700"><path d="M1 1.500h20l-7.500 8V19h-5V9.500z" /></svg>
      <h2>Filters</h2>
      <HeadIcons>
        <svg width="17" height="13" viewBox="0 0 17 15" fill="none" stroke="#252423" strokeWidth="1.600"><path d="M1 8C3 0 14 0 16 8" /><circle cx="8.500" cy="8" r="2.800" /></svg>
        <Chevrons />
      </HeadIcons>
    </PaneHead>
    <SearchBox>
      <svg width="19" height="19" viewBox="0 0 19 19" fill="none" stroke="#3b3a39" strokeWidth="1.400"><circle cx="12" cy="7" r="6" /><path d="M8 11.500L1 18" /></svg>
      Search
    </SearchBox>
    <FilterRule />
    <FilterHead $mt={10}><span>Filters on this page</span><span>...</span></FilterHead>
    <DropBox>Add data fields here</DropBox>
    <FilterHead $mt={34}><span>Filters on all pages</span><span>...</span></FilterHead>
    <DropBox>Add data fields here</DropBox>
  </Filters>
);

const Visualizations = () => (
  <VizPane>
    <PaneHead $l={10} $r={9}><h2>Visualizations</h2><Chevrons /></PaneHead>
    <Build>Build visual</Build>
    <ModeRow>
      <ModeTile>
        <svg width="30" height="31" viewBox="0 0 30 31"><path d="M0 1h23" stroke="#252423" strokeWidth="1.500" /><g fill={green} stroke="#252423" strokeWidth="1.800" strokeDasharray="2.200 1.800"><rect x="1" y="7" width="28" height="9" /><rect x="1" y="20" width="28" height="9" /></g></svg>
      </ModeTile>
      <svg width="32" height="40" viewBox="0 0 32 40" fill="none" stroke="#252423" strokeWidth="1.700"><path d="M4 34H1V6H14L22 15V17M14 6V15H22" /><path d="M29 16L19 27l3 3L31 17zM19 27c-5 0-4 5-9 7 5 2 12 1 12-4" fill="#fff" /></svg>
    </ModeRow>
    <svg width="225" height="11" viewBox="0 0 225 11" fill="none" stroke="#8a8886" strokeWidth="1.300"><path d="M0 9.500H20L30 .8 40 9.500H225" /></svg>
    <VizGrid>{visuals.map((v, i) => <React.Fragment key={i}>{v}</React.Fragment>)}</VizGrid>
    <More><svg width="19" height="3" viewBox="0 0 19 3" fill="#252423"><circle cx="1.500" cy="1.500" r="1.300" /><circle cx="9.500" cy="1.500" r="1.300" /><circle cx="17" cy="1.500" r="1.300" /></svg></More>
    <WellLabel $mt={11}>Values</WellLabel>
    <Well $mt={7} $h={35} $l={13}>Add data fields here</Well>
    <WellLabel $mt={13} $bold>Drill through</WellLabel>
    <WellLabel $mt={12}>Cross-report<Switch><i />Off</Switch></WellLabel>
    <WellLabel $mt={14}>Keep all filters<Switch $on><i />On</Switch></WellLabel>
    <Well $mt={13} $h={32} $l={10}>Add drill-through fields here</Well>
  </VizPane>
);

const DataFields = () => (
  <DataPane>
    <PaneHead $l={10} $r={8}><h2>Data</h2><Chevrons /></PaneHead>
    <DataSearch>
      <svg width="19" height="19" viewBox="0 0 19 19" fill="none" stroke="#616161" strokeWidth="1.400"><circle cx="8" cy="7.500" r="6.500" /><path d="M12.500 12.500L18 18" /></svg>
      Search
    </DataSearch>
    {["Doctor", "Patient"].map((n) => (
      <TableRow key={n}>
        <svg width="9" height="15" viewBox="0 0 9 15" fill="none" stroke="#3b3a39" strokeWidth="1.200"><path d="M1 1l7 6.500L1 14" /></svg>
        <svg width="15" height="16" viewBox="0 0 15 16" fill="none" stroke="#3b3a39" strokeWidth="1.300"><rect x=".7" y="1" width="13.600" height="14" rx="2.500" /><path d="M.7 5.700h13.600M.7 10.300h13.600M5.200 1v14M9.800 1v14" /></svg>
        {n}
      </TableRow>
    ))}
  </DataPane>
);

const RailIcons = () => (
  <Rail>
    <svg width="25" height="23" viewBox="0 0 25 23" fill="none" stroke="#111" strokeWidth="1.600"><path d="M-4 18.500H8.500M0 17V9h2.500v8M4.500 17V4h3v13" /></svg>
    <svg width="25" height="23" viewBox="0 0 25 23" fill="none" stroke="#797775" strokeWidth="1.500"><path d="M-8 2H10.500V20H-8M-8 6H10.500M-8 11H10.500M-8 15.500H10.500M4 6v14" /></svg>
    <svg width="25" height="23" viewBox="0 0 25 23" fill="none" stroke="#797775" strokeWidth="1.500"><rect x="2" y="1.500" width="9.500" height="8" /><rect x="2" y="14" width="9.500" height="8" /><path d="M2 5.500h9.500M2 18h9.500M-4 3.500h6M-4 18h6" /></svg>
    <svg width="25" height="23" viewBox="0 0 25 23" fill="none" stroke="#797775" strokeWidth="1.500"><path d="M-4 2H1L5 7V11M1 2v5h4M5 11c1 4 0 6-2 9M8 10c1 4 0 7-2 10" /><path d="M-2 13l5 6M3 13l-5 6" strokeWidth="1.300" /></svg>
    <svg width="25" height="23" viewBox="0 0 25 23" fill="none" stroke="#797775" strokeWidth="1.500"><path d="M-4 1H2L7 6V12M1 1v6h6" /><text x="12" y="21" textAnchor="end" fontSize="9.600" fontWeight="600" fontFamily={ui} fill="#797775" stroke="none">TMDL</text></svg>
  </Rail>
);

/* ---------- taskbar icons ---------- */
const A = ({ children, w = 30 }) => <svg width={w} height="38" viewBox={`0 0 ${w} 38`}>{children}</svg>;
const Apps = () => (
  <>
    <Slot><A><rect x="0" y="14" width="20" height="18" rx="2" fill="#6f6d6b" /><rect x="8" y="5" width="22" height="19" rx="2" fill="#f0f0f0" /><path d="M8 14h12v10H8z" fill="#bdbbb9" /></A></Slot>
    <Slot><svg width="30" height="4" /><CopilotLogo s={30} id="t" /></Slot>
    <Slot><A>
      <defs><linearGradient id="edgeTop" x1="0" y1="0" x2="1" y2=".3"><stop offset="0" stopColor="#2bb1e8" /><stop offset="1" stopColor="#63e06c" /></linearGradient></defs>
      <circle cx="15" cy="19" r="15" fill="#1272c8" /><path d="M0 19C1 0 28 0 30 17c0 6-4 8-9 8-3 0-3-2-2-4 0-6-12-8-19-2z" fill="url(#edgeTop)" />
      <path d="M10 22c0-4 3-6 6-6-3 2-2 9 5 11 3 1 6 0 7-1-7 12-18 6-18-4z" fill="#0c4fa0" />
    </A></Slot>
    <Slot><A><path d="M0 8a2 2 0 0 1 2-2h8l3 3h15a2 2 0 0 1 2 2v6H0z" fill="#e8a317" /><path d="M0 13h30v17a2 2 0 0 1-2 2H2a2 2 0 0 1-2-2z" fill="#ffcf48" /><path d="M5 32v-5a2 2 0 0 1 2-2h16a2 2 0 0 1 2 2v5z" fill="#1673c4" /><path d="M9 29h12" stroke="#0b4c8c" strokeWidth="1.500" /></A></Slot>
    <Slot><A><path d="M9 10V5h12v5" fill="none" stroke="#35b6e8" strokeWidth="2" /><rect x="1" y="9" width="28" height="25" rx="3" fill="#f3f3f3" /><path d="M9 15h5.500v5.500H9z" fill="#f25022" /><path d="M15.500 15H21v5.500h-5.500z" fill="#7fba00" /><path d="M9 21.500h5.500V27H9z" fill="#00a4ef" /><path d="M15.500 21.500H21V27h-5.500z" fill="#ffb900" /></A></Slot>
    <Slot><A><circle cx="15" cy="19" r="14.300" fill="#0b49c9" stroke="#fff" strokeWidth="1.200" /><text x="5" y="24" fontSize="19" fontStyle="italic" fontWeight="600" fontFamily={ui} fill="#fff" textLength="20" lengthAdjust="spacingAndGlyphs">hp</text></A></Slot>
    <Slot $shift={6}><A w={36}><circle cx="15" cy="20" r="14" fill="#0d8fd6" stroke="#e8f5fc" strokeWidth="2" /><text x="9.500" y="28.500" fontSize="22" fontWeight="700" fontFamily={ui} fill="#fff">?</text><circle cx="26" cy="9" r="9.500" fill="#ffb914" /></A></Slot>
    <Slot><A><path d="M1 5l14 8 14-8v22l-14 7L1 27z" fill="#c8242b" /><path d="M7 14l8 5 8-5v11l-8 4-8-4z" fill="#2b2918" /><path d="M7 8l8 12 8-12v8l-8 9-8-9z" fill="#c8242b" /></A></Slot>
    <Slot><A>
      <defs><linearGradient id="fox" x1=".8" y1="0" x2=".2" y2="1"><stop offset="0" stopColor="#ffe03a" /><stop offset=".45" stopColor="#ff7a2a" /><stop offset="1" stopColor="#f0257a" /></linearGradient></defs>
      <path d="M2 12l2-5 4 3c2-2 5-1 7-1 0-3 2-5 4-6 0 4 9 6 10 16 1 20-28 20-28 1 0-3 0-5 1-8z" fill="url(#fox)" /><circle cx="15.500" cy="20" r="6" fill="#8a46e0" /><path d="M5 13c4-2 8 0 10 2-3 0-5 1-5 3-3 0-5-2-5-5z" fill="#ffab2e" />
    </A></Slot>
    <Slot><A><circle cx="15" cy="19" r="14.500" fill="#1ed760" /><path d="M6 14c6-2 13-1 18 2M7 19c5-1.500 11-1 15.500 2M8 24c4-1 9-1 13 1.500" fill="none" stroke="#17221a" strokeWidth="2.300" strokeLinecap="round" /></A><RunMark /></Slot>
    <Slot $shift={6}><A w={36}><g transform="translate(0 1)"><circle cx="15" cy="19" r="14.500" fill="#fbc116" /><path d="M2.500 11.500A14.500 14.500 0 0 1 29 15H15z" fill="#e33b2e" /><path d="M2.500 11.500A14.500 14.500 0 0 0 13.500 33.400L19 23 15 19z" fill="#2da94f" /><circle cx="15" cy="19" r="7" fill="#fff" /><circle cx="15" cy="19" r="5.500" fill="#3d7ff0" /></g><circle cx="25.500" cy="9" r="9.500" fill="#5c6bc0" /><text x="21.500" y="13" fontSize="11" fontFamily={ui} fill="#fff">D</text></A><RunMark $back={6} /></Slot>
    <Slot $active><A><path d="M17 4h8a1 1 0 0 1 1 1v28H15z" fill="#e0a511" /><path d="M9 12h9a1 1 0 0 1 1 1v20H8z" fill="#f2c52d" /><path d="M3 19h9a1 1 0 0 1 1 1v13H3a1 1 0 0 1-1-1V20a1 1 0 0 1 1-1z" fill="#f7da62" /></A><RunMark $wide /></Slot>
  </>
);

const TaskBarRow = () => (
  <Taskbar>
    <Weather>
      <svg width="35" height="42" viewBox="0 0 35 42"><path d="M13 8c2 14-6 20-16 14C-2 12 8 14 13 8z" fill="#f5a51d" /><circle cx="12" cy="25" r="8.500" fill="#8fb8f5" /><circle cx="22" cy="28" r="8" fill="#a5c6fa" /><circle cx="4" cy="30" r="7" fill="#9cc0f8" /><path d="M4 27h18v9H4z" fill="#9cc0f8" /><circle cx="23.500" cy="10" r="10" fill="#c42b1c" /><text x="20" y="15" fontSize="13" fontFamily={ui} fill="#fff">3</text></svg>
      <WeatherText><p>24°C</p><p>Mostly cloudy</p></WeatherText>
    </Weather>
    <svg width="29" height="30" viewBox="0 0 29 30"><defs><linearGradient id="win" x1="0" y1="0" x2="1" y2="1"><stop offset="0" stopColor="#7fdcff" /><stop offset="1" stopColor="#0a8ff5" /></linearGradient></defs><path d="M0 0h14v14.300H0zM15 0h14v14.300H15zM0 15.500h14V30H0zM15 15.500h14V30H15z" fill="url(#win)" /></svg>
    <Pill>
      <svg width="19" height="20" viewBox="0 0 19 20" fill="none" stroke="#252423" strokeWidth="2"><circle cx="8.500" cy="8" r="6.800" /><path d="M13 13l5 6" /></svg>
      Search web &amp; PC
      <svg width="65" height="32" viewBox="0 0 65 32">
        <defs><linearGradient id="scene" x1="0" y1="0" x2="1" y2="1"><stop offset="0" stopColor="#2d4a6e" /><stop offset=".5" stopColor="#251a48" /><stop offset="1" stopColor="#45265c" /></linearGradient></defs>
        <rect width="65" height="32" rx="16" fill="url(#scene)" />
        <path d="M22 32C40 24 48 14 54 0" stroke="#6db2d8" strokeWidth="2" fill="none" />
        <g fill="#c9c5dd"><path d="M12 9l7-6 2 4 5 3-6 1zM28 10l8-5 2 3 7 3-10 2zM42 4l8-3 1 3 7 1-8 3zM5 22l11-6 8-3-2 4 6 4-10 1-9 4zM32 19l7-5 2 3 7 3-9 2zM47 15l6-4 2 3 6 2-8 2zM18 27l6-3 2 3 4 2-8 1zM37 26l5-4 2 3 6 1-8 3z" /></g>
      </svg>
    </Pill>
    <Apps />
    <Tray>
      <svg width="37" height="10" viewBox="0 0 37 10" fill="none" stroke="#fff" strokeWidth="1.800"><path d="M1 8l6-6 6 6" /></svg>
      <svg width="40" height="22" viewBox="0 0 40 22"><path d="M4 15a5 5 0 0 1 1-9c3-6 12-4 12 2 4 2 3 7 0 7z" fill="#b8b6b4" /><circle cx="15" cy="14.500" r="6.500" fill="#d3222a" /><path d="M12.500 12l5 5M17.500 12l-5 5" stroke="#fff" strokeWidth="1.500" /></svg>
      <svg width="41" height="24" viewBox="0 0 41 24" fill="none" stroke="#fff" strokeWidth="1.500"><path d="M1 8C4 1 14 1 18 7M18 1v6h-6M1 20v-6h6M2 15c1 3 3 5 6 6" /><circle cx="15" cy="16" r="5.500" fill="#ff9800" stroke="none" /></svg>
      <TrayText $w={32} $s={14.2} $a="center" $ls={0}>{"ENG\nIN"}</TrayText>
      <svg width="51" height="22" viewBox="-22 0 51 22" fill="none" stroke="#fff" strokeWidth="1.500"><path d="M1 8c5-6 13-6 18 0M3.500 11.500c4-4 9-4 13 0M6.500 14.500c2-2 5-2 7 0" /><circle cx="10" cy="17.500" r="1.300" fill="#fff" /></svg>
      <svg width="30" height="20" viewBox="0 0 30 20" fill="none" stroke="#fff" strokeWidth="1.500"><path d="M1 7v6h4l5 4V3L5 7zM12.500 7c1.500 2 1.500 4 0 6M15 4.500c3 3 3 8 0 11M17.500 2c4 5 4 11 0 16" /></svg>
      <svg width="20" height="20" viewBox="0 0 20 20" fill="none" stroke="#fff" strokeWidth="1.500"><path d="M6 4H4a3 3 0 0 0-3 3v7a3 3 0 0 0 3 3h11a3 3 0 0 0 3-3V7a3 3 0 0 0-2-3" /><path d="M4 10h5l4 3 2-2v3.500H4z" fill="#fff" stroke="none" /><path d="M11 0v3M8 5h7M8 5c0 5 6 5 6 0M11 8v3" /></svg>
      <TrayText $w={98} $s={14.3} $a="right" $ls={0.2}>{"20:21\n08-09-2025"}</TrayText>
    </Tray>
  </Taskbar>
);

export default function App() {
  return (
    <Screen>
      <Global />
      <Ribbon />
      <Work>
        <RailIcons />
        <Middle>
          <MiddleTop>
            <Canvas>
              <TitleBox><h1>HOSPITAL DASHBOARD</h1><ScrollThumb /></TitleBox>
              <Card $x={66} $y={127} $lines={1} $ls={0.27}><h3>Sum of Length_of_Stay_Days by Gender</h3><StayByGender /></Card>
              <Card $x={560} $y={127} $lines={1} $ls={0.12}><h3>Count of Patient_ID by Specialization</h3><PatientsBySpecialization /></Card>
              <Card $x={66} $y={411} $lines={2} $ls={0.13}><h3>{"Count of Patient_ID by Doctor_ID and\nDoctor_Name"}</h3><PatientsByDoctor /></Card>
              <Card $x={560} $y={411} $lines={2} $ls={0.25}><h3>{"Sum of Length_of_Stay_Days by\nDepartment"}</h3><StayByDepartment /></Card>
              <PageEdge />
            </Canvas>
            <FiltersPane />
          </MiddleTop>
          <PageBar>
            <ViewIcon $w={60} $l={13} $top={8}>
              <svg width="30" height="31" viewBox="0 0 30 31" fill="none" stroke="#484644" strokeWidth="1.600"><path d="M3 2h22v13.500H3zM14 16v4M9 20h10" /><path d="M1.500 28.500h27" stroke={green} strokeWidth="3" strokeLinecap="round" /></svg>
            </ViewIcon>
            <ViewIcon $w={55} $l={14} $top={6}><svg width="17" height="26" viewBox="0 0 17 26" fill="none" stroke="#484644" strokeWidth="1.600"><rect x="1" y="1" width="15" height="24" rx="1" /><path d="M7.500 21.500h2" /></svg></ViewIcon>
            <ViewIcon $w={44} $l={2} $top={16}><svg width="34" height="11" viewBox="0 0 34 11" fill="#c8c6c4"><path d="M6 0v11L0 5.500zM28 0v11l6-5.500z" /></svg></ViewIcon>
            <PageTab>Page 1</PageTab>
            <AddPage><svg width="15" height="15" viewBox="0 0 15 15" stroke="#fff" strokeWidth="3.200"><path d="M7.500 1v13M1 7.500h13" /></svg></AddPage>
          </PageBar>
        </Middle>
        <Visualizations />
        <DataFields />
      </Work>
      <Status>
        <p>Page 1 of 1</p>
        <svg width="157" height="16" viewBox="1629 952 157 16" stroke="#605e5c" fill="none"><path d="M1630 959.500h6M1774.500 959.500h9.500M1779.200 954.500v10" strokeWidth="2" /><path d="M1642 959.500h125M1704.500 956v7" /><path d="M1685.500 953v13" strokeWidth="5" /></svg>
        <Percent>73%</Percent>
        <svg width="22" height="18" viewBox="0 0 22 18" fill="none" stroke="#605e5c" strokeWidth="1.600"><rect x="1" y="1.500" width="19" height="15" /><path d="M4.500 7.500V5H7M14 5h2.500v2.500M4.500 10.500V13H7M14 13h2.500v-2.500" strokeWidth="1.200" /></svg>
      </Status>
      <TaskBarRow />
    </Screen>
  );
}
